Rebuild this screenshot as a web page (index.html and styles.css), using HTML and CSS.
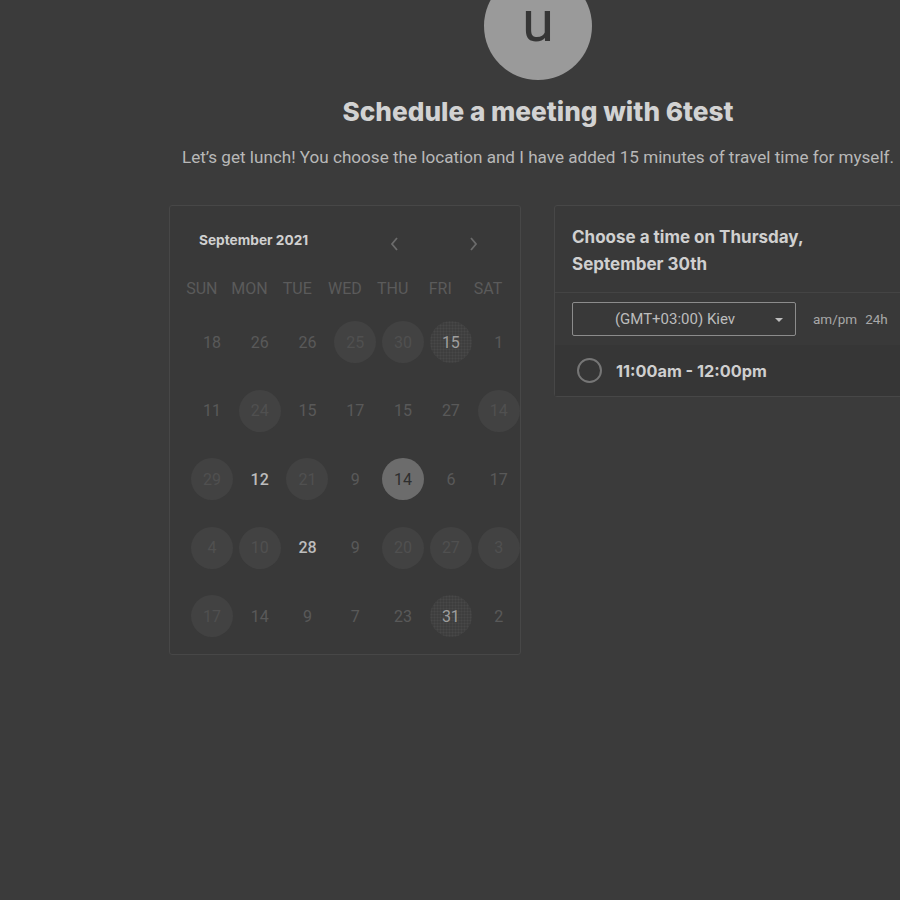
FILE: index.html
```html
<!DOCTYPE html>
<html lang="en">
<head>
<meta charset="utf-8">
<title>Schedule a meeting</title>
<link rel="stylesheet" href="styles.css">
</head>
<body>
<div class="page">
  <header class="intro">
    <div class="avatar">u</div>
    <h1 class="title">Schedule a meeting with 6test</h1>
    <p class="subtitle">Let’s get lunch! You choose the location and I have added 15 minutes of travel time for myself.</p>
  </header>
  <main class="panels">
    <section class="calendar">
      <div class="cal-head">
        <span class="month">September 2021</span>
        <div class="nav">
          <span class="arrow"><svg width="12" height="16" viewBox="0 0 12 16"><path d="M8 2 L3 8 L8 14" fill="none" stroke="#6b6b6b" stroke-width="1.8"/></svg></span>
          <span class="arrow arrow-next"><svg width="12" height="16" viewBox="0 0 12 16"><path d="M4 2 L9 8 L4 14" fill="none" stroke="#6b6b6b" stroke-width="1.8"/></svg></span>
        </div>
      </div>
      <div class="weekdays">
        <span>SUN</span><span>MON</span><span>TUE</span><span>WED</span><span>THU</span><span>FRI</span><span>SAT</span>
      </div>
      <div class="days">
        <span class="day">18</span><span class="day">26</span><span class="day">26</span><span class="day avail">25</span><span class="day avail">30</span><span class="day dotted">15</span><span class="day">1</span>
        <span class="day">11</span><span class="day avail">24</span><span class="day">15</span><span class="day">17</span><span class="day">15</span><span class="day">27</span><span class="day avail">14</span>
        <span class="day avail">29</span><span class="day bright">12</span><span class="day avail">21</span><span class="day">9</span><span class="day selected">14</span><span class="day">6</span><span class="day">17</span>
        <span class="day avail">4</span><span class="day avail">10</span><span class="day bright">28</span><span class="day">9</span><span class="day avail">20</span><span class="day avail">27</span><span class="day avail">3</span>
        <span class="day avail">17</span><span class="day">14</span><span class="day">9</span><span class="day">7</span><span class="day">23</span><span class="day dotted">31</span><span class="day">2</span>
      </div>
    </section>
    <section class="times">
      <h2 class="times-title">Choose a time on Thursday, September 30th</h2>
      <div class="tz-row">
        <div class="tz-select">
          <span>(GMT+03:00) Kiev</span>
          <span class="caret"></span>
        </div>
        <div class="format"><span>am/pm</span><span>24h</span></div>
      </div>
      <div class="slot">
        <span class="radio"></span>
        <span class="slot-text">11:00am - 12:00pm</span>
      </div>
    </section>
  </main>
</div>
</body>
</html>
```
FILE: styles.css
```css
html, body {
  margin: 0;
  padding: 0;
  overflow: hidden;
  background: #3b3b3b;
  height: 900px;
}
body {
  font-family: Roboto, "Liberation Sans", sans-serif;
  color: #cfcfcf;
}
.page {
  width: 738px;
  margin-left: 169px;
}
.intro {
  display: flex;
  flex-direction: column;
  align-items: center;
}
.avatar {
  width: 108px;
  height: 108px;
  margin-top: -28px;
  border-radius: 50%;
  background: #9a9a9a;
  color: #363636;
  font-family: Roboto, sans-serif;
  font-size: 58px;
  line-height: 98px;
  text-align: center;
}
.title {
  margin: 16px 0 0;
  font-family: Inter, sans-serif;
  font-weight: 800;
  font-size: 26.2px;
  line-height: 32px;
  color: #d2d2d2;
}
.subtitle {
  margin: 19px 0 0;
  font-size: 17.1px;
  line-height: 20px;
  color: #b8b8b8;
  white-space: nowrap;
}
.panels {
  display: flex;
  align-items: flex-start;
  gap: 33px;
  margin-top: 38px;
}
.calendar {
  width: 350px;
  height: 448px;
  border: 1px solid #474747;
  border-radius: 3px;
  background: #393939;
  flex: none;
}
.cal-head {
  display: flex;
  align-items: center;
  justify-content: space-between;
  padding: 24px 41px 0 29px;
  height: 20px;
}
.month {
  font-family: Inter, sans-serif;
  font-weight: 700;
  font-size: 13.7px;
  color: #d0d0d0;
}
.nav {
  display: flex;
  gap: 66px;
  margin-top: 8px;
}
.arrow {
  display: flex;
  width: 12px;
  height: 16px;
}
.weekdays {
  display: grid;
  grid-template-columns: repeat(7, 47.7px);
  padding-left: 8px;
  margin-top: 29px;
  font-size: 16px;
  line-height: 20px;
  color: #5b5b5b;
}
.weekdays span {
  text-align: center;
}
.days {
  display: grid;
  grid-template-columns: repeat(7, 47.8px);
  grid-auto-rows: 68.5px;
  padding-left: 18px;
  margin-top: 22px;
}
.day {
  display: flex;
  align-items: center;
  justify-content: center;
  width: 42px;
  height: 42px;
  margin: 0 auto;
  border-radius: 50%;
  font-size: 16px;
  color: #595959;
}
.day.avail {
  background: #424242;
  color: #505050;
}
.day.bright {
  color: #bdbdbd;
  font-weight: 500;
}
.day.selected {
  background: #6c6c6c;
  color: #2e2e2e;
}
.day.dotted {
  background: radial-gradient(circle, #484848 0.8px, transparent 1.2px) 0 0 / 3px 3px, #3e3e3e;
  color: #9e9e9e;
}
.times {
  width: 352px;
  border: 1px solid #474747;
  border-radius: 3px;
  background: #393939;
  flex: none;
}
.times-title {
  margin: 0;
  padding: 18px 60px 14px 17px;
  font-family: Inter, sans-serif;
  font-weight: 700;
  font-size: 17px;
  line-height: 27px;
  color: #d0d0d0;
  border-bottom: 1px solid #444444;
}
.tz-row {
  display: flex;
  align-items: center;
  padding: 9px 0 9px 17px;
  gap: 17px;
}
.tz-select {
  position: relative;
  box-sizing: border-box;
  width: 224px;
  height: 34px;
  border: 1px solid #8c8c8c;
  border-radius: 2px;
  display: flex;
  align-items: center;
  justify-content: center;
  font-size: 15px;
  color: #bdbdbd;
  padding-right: 18px;
}
.caret {
  position: absolute;
  right: 12px;
  top: 15px;
  border-left: 4px solid transparent;
  border-right: 4px solid transparent;
  border-top: 4px solid #bdbdbd;
}
.format {
  display: flex;
  gap: 8px;
  font-size: 13.5px;
  color: #a8a8a8;
}
.slot {
  display: flex;
  align-items: center;
  height: 51px;
  background: #363636;
  padding-left: 22px;
  gap: 14px;
}
.radio {
  box-sizing: border-box;
  width: 25px;
  height: 25px;
  border: 2px solid #767676;
  border-radius: 50%;
}
.slot-text {
  font-family: Inter, sans-serif;
  font-weight: 700;
  font-size: 16.3px;
  color: #cfcfcf;
}
```
